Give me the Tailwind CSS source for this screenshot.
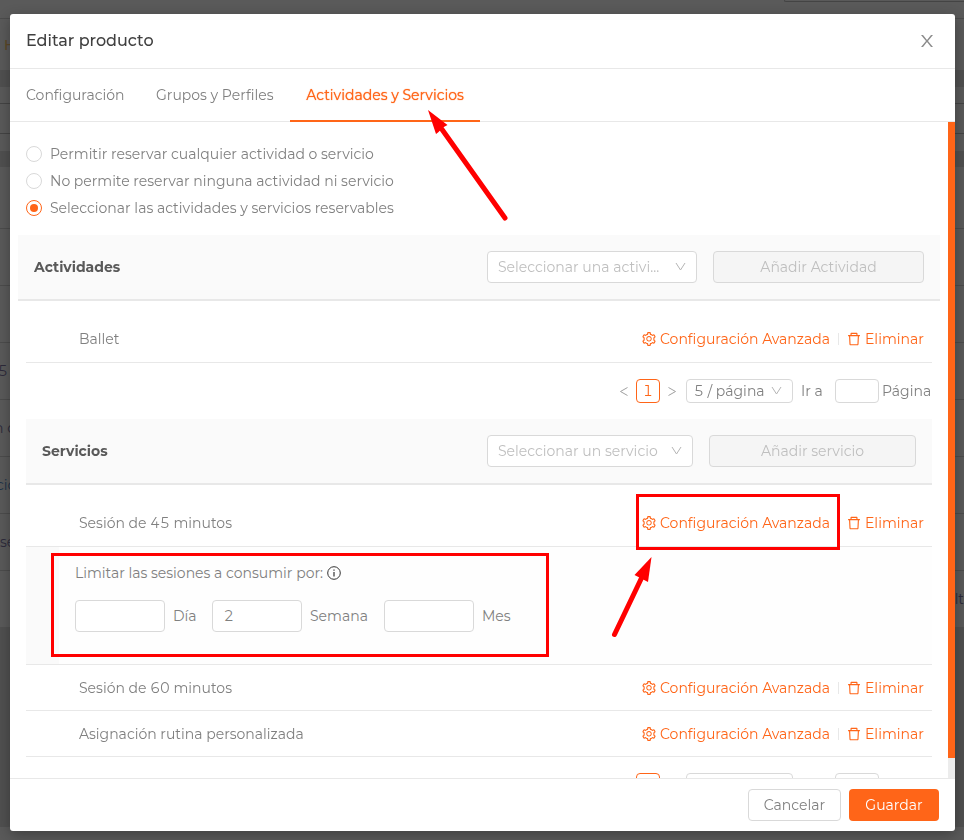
<!DOCTYPE html>
<html lang="es">
<head>
    <meta charset="UTF-8">
    <meta name="viewport" content="width=device-width, initial-scale=1.0">
    <title>Editar producto</title>
    <script src="https://cdn.jsdelivr.net/npm/@tailwindcss/browser@4"></script>
</head>
<body class="font-['Montserrat','Inter',sans-serif] text-[14px] leading-5 font-normal tabular-nums text-[#808080] bg-[#5a5a5a] h-screen overflow-hidden">
    <!-- Icons -->
    <svg class="hidden">
        <symbol id="icon-setting" viewBox="64 64 896 896"><path d="M924.8 625.7l-65.5-56c3.1-19 4.7-38.4 4.7-57.8s-1.6-38.8-4.7-57.8l65.5-56a32.03 32.03 0 009.3-35.2l-.9-2.6a443.74 443.74 0 00-79.7-137.9l-1.8-2.1a32.12 32.12 0 00-35.1-9.5l-81.3 28.9c-30-24.6-63.5-44-99.7-57.6l-15.7-85a32.05 32.05 0 00-25.8-25.7l-2.7-.5c-52.1-9.4-106.9-9.4-159 0l-2.7.5a32.05 32.05 0 00-25.8 25.7l-15.8 85.4a351.86 351.86 0 00-99 57.4l-81.9-29.1a32 32 0 00-35.1 9.5l-1.8 2.1a446.02 446.02 0 00-79.7 137.9l-.9 2.6c-4.5 12.5-.8 26.5 9.3 35.2l66.3 56.6c-3.1 18.8-4.6 38-4.6 57.1 0 19.2 1.5 38.4 4.6 57.1L99 625.5a32.03 32.03 0 00-9.3 35.2l.9 2.6c18.1 50.4 44.9 96.9 79.7 137.9l1.8 2.1a32.12 32.12 0 0035.1 9.5l81.9-29.1c29.8 24.5 63.1 43.9 99 57.4l15.8 85.4a32.05 32.05 0 0025.8 25.7l2.7.5a449.4 449.4 0 00159 0l2.7-.5a32.05 32.05 0 0025.8-25.7l15.7-85a350 350 0 0099.7-57.6l81.3 28.9a32 32 0 0035.1-9.5l1.8-2.1c34.8-41.1 61.6-87.5 79.7-137.9l.9-2.6c4.5-12.3.8-26.3-9.3-35zM788.3 465.9c2.5 15.1 3.8 30.6 3.8 46.1s-1.3 31-3.8 46.1l-6.6 40.1 74.7 63.9a370.03 370.03 0 01-42.6 73.6L721 702.8l-31.4 25.8c-23.9 19.6-50.5 35-79.3 45.8l-38.1 14.3-17.9 97a377.5 377.5 0 01-85 0l-17.9-97.2-37.8-14.5c-28.5-10.8-55-26.2-78.7-45.7l-31.4-25.9-93.4 33.2c-17-22.9-31.2-47.6-42.6-73.6l75.5-64.5-6.5-40c-2.4-14.9-3.7-30.3-3.7-45.5 0-15.3 1.2-30.6 3.7-45.5l6.5-40-75.5-64.5c11.3-26.1 25.6-50.7 42.6-73.6l93.4 33.2 31.4-25.9c23.7-19.5 50.2-34.9 78.7-45.7l37.9-14.3 17.9-97.2c28.1-3.2 56.8-3.2 85 0l17.9 97 38.1 14.3c28.7 10.8 55.4 26.2 79.3 45.8l31.4 25.8 92.8-32.9c17 22.9 31.2 47.6 42.6 73.6L781.8 426l6.5 39.9zM512 326c-97.2 0-176 78.8-176 176s78.8 176 176 176 176-78.8 176-176-78.8-176-176-176zm79.2 255.2A111.6 111.6 0 01512 614c-29.9 0-58-11.7-79.2-32.8A111.6 111.6 0 01400 502c0-29.9 11.7-58 32.8-79.2C454 401.6 482.1 390 512 390c29.9 0 58 11.6 79.2 32.8A111.6 111.6 0 01624 502c0 29.9-11.7 58-32.8 79.2z"/></symbol>
        <symbol id="icon-delete" viewBox="64 64 896 896"><path d="M360 184h-8c4.4 0 8-3.6 8-8v8h304v-8c0 4.4 3.6 8 8 8h-8v72h72v-80c0-35.3-28.7-64-64-64H352c-35.3 0-64 28.7-64 64v80h72v-72zm504 72H160c-17.7 0-32 14.3-32 32v32c0 4.4 3.6 8 8 8h60.4l24.7 523c1.6 34.1 29.8 61 63.9 61h454c34.2 0 62.3-26.8 63.9-61l24.7-523H888c4.4 0 8-3.6 8-8v-32c0-17.7-14.3-32-32-32zM731.3 840H292.7l-24.2-512h487l-24.2 512z"/></symbol>
        <symbol id="icon-down" viewBox="0 0 12 12"><path d="M1 2l4.500 7L10 2" fill="none" stroke="currentColor"/></symbol>
        <symbol id="icon-left" viewBox="0 0 12 12"><path d="M9.500 2.500l-7 4 7 4" fill="none" stroke="currentColor"/></symbol>
        <symbol id="icon-right" viewBox="0 0 12 12"><path d="M2.500 2.500l7 4-7 4" fill="none" stroke="currentColor"/></symbol>
    </svg>

    <!-- Page behind the modal -->
    <div class="h-full flex flex-col overflow-hidden text-[#2d2a3a]">
        <div class="h-[19px] shrink-0 border-b border-[#4c4c4c] flex justify-end items-start">
            <div class="w-[180px] h-[2px] border-b border-l border-[#444] rounded-bl"></div>
        </div>
        <div class="h-[51px] shrink-0 flex items-center pl-1 text-[#5c4726] font-medium">H</div>
        <div class="h-[17px] shrink-0 bg-[#505050]"></div>
        <div class="h-[17px] shrink-0 border-b border-[#444]"></div>
        <div class="h-[30px] shrink-0 border-b border-[#444]"></div>
        <div class="h-[17px] shrink-0"></div>
        <div class="h-4 shrink-0 bg-[#505050]"></div>
        <div class="h-[62px] shrink-0 border-b border-[#4c4c4c]"></div>
        <div class="h-[57px] shrink-0 border-b border-[#4c4c4c]"></div>
        <div class="h-[57px] shrink-0 border-b border-[#4c4c4c]"></div>
        <div class="h-[57px] shrink-0 border-b border-[#4c4c4c] flex items-center"><span class="-ml-0.5">5</span></div>
        <div class="h-[57px] shrink-0 border-b border-[#4c4c4c] flex items-center"><span class="-ml-1.5">n o</span></div>
        <div class="h-[57px] shrink-0 border-b border-[#4c4c4c] flex items-center text-[#1f3348]"><span class="-ml-1">cio</span></div>
        <div class="h-[57px] shrink-0 border-b border-[#4c4c4c] flex items-center">se</div>
        <div class="h-[56px] shrink-0 flex items-center justify-end">lt</div>
        <div class="h-[200px] shrink-0 bg-[#505050]"></div>
    </div>

    <!-- Modal -->
    <div class="fixed inset-0 pt-[14px] pr-[9px] pb-[9px] pl-[10px]">
        <div role="dialog" aria-labelledby="title" class="h-full flex flex-col bg-white rounded-[3px] overflow-hidden shadow-[0_4px_14px_rgba(0,0,0,0.3)]">
            <header class="h-[55px] shrink-0 px-4 pb-px flex items-center justify-between border-b border-[#e8e8e8]">
                <h1 id="title" class="text-[16px] font-medium text-[#404040]">Editar producto</h1>
                <button aria-label="Cerrar" class="w-6 h-6 flex items-center justify-center text-[#8c8c8c]">
                    <svg class="w-4 h-4" viewBox="0 0 16 16" fill="currentColor"><path d="M2 2h2l4 5 4-5h2L9 8l5 6h-2L8 9l-4 5H2l5-6z"/></svg>
                </button>
            </header>

            <nav class="h-[53px] shrink-0 flex border-b border-[#e8e8e8]">
                <a href="#config" class="w-[130px] flex items-center pl-4">Configuración</a>
                <a href="#grupos" class="w-[150px] flex items-center pl-4">Grupos y Perfiles</a>
                <a href="#actividades" class="w-[190px] h-[53px] flex items-center justify-center text-[#ff6518] [text-shadow:0_0_1px_#ff6518] border-b-2 border-[#ff6518]">Actividades y Servicios</a>
            </nav>

            <div class="flex-1 min-h-0 flex">
                <main class="flex-1 min-w-0 overflow-hidden pt-[18px] pl-4 pr-4">
                    <div>
                        <label class="h-[27px] flex items-center gap-2">
                            <input type="radio" name="reserva" class="appearance-none w-4 h-4 rounded-full border border-[#d9d9d9]">
                            Permitir reservar cualquier actividad o servicio
                        </label>
                        <label class="h-[27px] flex items-center gap-2">
                            <input type="radio" name="reserva" class="appearance-none w-4 h-4 rounded-full border border-[#d9d9d9]">
                            No permite reservar ninguna actividad ni servicio
                        </label>
                        <label class="h-[27px] flex items-center gap-2">
                            <input type="radio" name="reserva" checked class="appearance-none w-4 h-4 rounded-full border border-[#ff6518] p-[3px] bg-clip-content bg-[#ff6518]">
                            Seleccionar las actividades y servicios reservables
                        </label>
                    </div>

                    <!-- Actividades -->
                    <section class="mt-[14px]">
                        <div class="-mx-2 h-[66px] px-4 flex items-center gap-4 bg-[#fafafa] border-b-2 border-[#e8e8e8]">
                            <h2 class="flex-1 font-bold text-[#595959]">Actividades</h2>
                            <div class="relative w-[210px]">
                                <select aria-label="Actividad" class="appearance-none w-full h-8 pl-2.5 pr-7 rounded border border-[#d9d9d9] bg-white text-[#bfbfbf]">
                                    <option>Seleccionar una activi...</option>
                                </select>
                                <svg class="absolute right-2.5 top-2.5 w-3 h-3 text-[#b5b5b5] pointer-events-none"><use href="#icon-down"/></svg>
                            </div>
                            <button disabled class="w-[211px] h-8 rounded border border-[#d9d9d9] bg-[#f5f5f5] text-[#bfbfbf]">Añadir Actividad</button>
                        </div>
                        <table class="w-full mt-[15px]">
                            <tbody>
                                <tr class="h-[46px] border-b border-[#e8e8e8]">
                                    <td class="pl-[53px]">Ballet</td>
                                    <td class="pr-2">
                                        <div class="flex justify-end items-center text-[#ff6518]">
                                            <a href="#avanzada" class="w-[188px] flex items-center gap-1 whitespace-nowrap"><svg class="w-3.5 h-3.5 shrink-0 fill-current"><use href="#icon-setting"/></svg>Configuración Avanzada</a>
                                            <span class="mx-2 w-px h-3 bg-[#e8e8e8]"></span>
                                            <a href="#eliminar" class="w-[77px] flex items-center gap-1 whitespace-nowrap"><svg class="w-3.5 h-3.5 shrink-0 fill-current"><use href="#icon-delete"/></svg>Eliminar</a>
                                        </div>
                                    </td>
                                </tr>
                            </tbody>
                        </table>
                        <div class="my-4 h-6 flex justify-end items-center">
                            <button aria-label="Anterior" class="w-6 h-6 flex items-center justify-center text-[#a0a0a0]"><svg class="w-3 h-3"><use href="#icon-left"/></svg></button>
                            <button class="w-6 h-6 rounded border border-[#ff6518] text-[#ff6518]">1</button>
                            <button aria-label="Siguiente" class="w-6 h-6 flex items-center justify-center text-[#a0a0a0]"><svg class="w-3 h-3"><use href="#icon-right"/></svg></button>
                            <div class="relative w-[107px] ml-0.5">
                                <select aria-label="Filas por página" class="appearance-none block w-full h-6 pl-[7px] rounded border border-[#d9d9d9]">
                                    <option>5 / página</option>
                                </select>
                                <svg class="absolute right-2.5 top-1.5 w-3 h-3 text-[#b5b5b5] pointer-events-none"><use href="#icon-down"/></svg>
                            </div>
                            <label class="ml-2 w-[34px]" for="pag1">Ir a</label>
                            <input id="pag1" type="text" class="w-11 h-6 px-2 rounded border border-[#d9d9d9]">
                            <span class="w-[53px] pl-[3px]">Página</span>
                        </div>
                    </section>

                    <!-- Servicios -->
                    <section>
                        <div class="h-[66px] px-4 flex items-center gap-4 bg-[#fafafa] border-b-2 border-[#e8e8e8]">
                            <h2 class="flex-1 font-bold text-[#595959]">Servicios</h2>
                            <div class="relative w-[206px]">
                                <select aria-label="Servicio" class="appearance-none w-full h-8 pl-2.5 pr-7 rounded border border-[#d9d9d9] bg-white text-[#bfbfbf]">
                                    <option>Seleccionar un servicio</option>
                                </select>
                                <svg class="absolute right-2.5 top-2.5 w-3 h-3 text-[#b5b5b5] pointer-events-none"><use href="#icon-down"/></svg>
                            </div>
                            <button disabled class="w-[207px] h-8 rounded border border-[#d9d9d9] bg-[#f5f5f5] text-[#bfbfbf]">Añadir servicio</button>
                        </div>
                        <table class="w-full mt-4">
                            <tbody>
                                <tr class="h-[46px] border-b border-[#e8e8e8]">
                                    <td class="pl-[53px]">Sesión de 45 minutos</td>
                                    <td class="pr-2">
                                        <div class="flex justify-end items-center text-[#ff6518]">
                                            <a href="#avanzada" class="relative z-10 w-[188px] flex items-center gap-1 whitespace-nowrap"><svg class="w-3.5 h-3.5 shrink-0 fill-current"><use href="#icon-setting"/></svg>Configuración Avanzada<span class="absolute -left-1.5 -right-2.5 -top-[19px] h-14 border-3 border-[#ff0000]"></span></a>
                                            <span class="mx-2 w-px h-3 bg-[#e8e8e8]"></span>
                                            <a href="#eliminar" class="w-[77px] flex items-center gap-1 whitespace-nowrap"><svg class="w-3.5 h-3.5 shrink-0 fill-current"><use href="#icon-delete"/></svg>Eliminar</a>
                                        </div>
                                    </td>
                                </tr>
                                <tr class="h-[118px] border-b border-[#e8e8e8]">
                                    <td colspan="2" class="p-0 align-top">
                                        <div class="relative h-[117px] border-l-[33px] border-[#fafafa] bg-[#fefefe] pt-4 pl-4">
                                            <div class="flex items-center gap-1">
                                                Limitar las sesiones a consumir por:
                                                <svg class="w-3.5 h-3.5 text-[#333]" viewBox="0 0 14 14" fill="none" stroke="currentColor"><circle cx="7" cy="7" r="6.300"/><path d="M7 6v4.500M7 3.500v1.300" stroke-width="1.200"/></svg>
                                            </div>
                                            <div class="mt-[17px] flex items-center">
                                                <input id="dia" type="text" class="w-[90px] h-8 px-[11px] rounded border border-[#d9d9d9] bg-white">
                                                <label for="dia" class="w-[47px] pl-2">Día</label>
                                                <input id="semana" type="text" value="2" class="w-[90px] h-8 px-[11px] rounded border border-[#d9d9d9] bg-white">
                                                <label for="semana" class="w-[82px] pl-2">Semana</label>
                                                <input id="mes" type="text" class="w-[90px] h-8 px-[11px] rounded border border-[#d9d9d9] bg-white">
                                                <label for="mes" class="pl-2">Mes</label>
                                            </div>
                                            <div class="absolute -left-2 top-1.5 w-[498px] h-[104px] border-3 border-[#ff0000] pointer-events-none"></div>
                                        </div>
                                    </td>
                                </tr>
                                <tr class="h-[46px] border-b border-[#e8e8e8]">
                                    <td class="pl-[53px]">Sesión de 60 minutos</td>
                                    <td class="pr-2">
                                        <div class="flex justify-end items-center text-[#ff6518]">
                                            <a href="#avanzada" class="w-[188px] flex items-center gap-1 whitespace-nowrap"><svg class="w-3.5 h-3.5 shrink-0 fill-current"><use href="#icon-setting"/></svg>Configuración Avanzada</a>
                                            <span class="mx-2 w-px h-3 bg-[#e8e8e8]"></span>
                                            <a href="#eliminar" class="w-[77px] flex items-center gap-1 whitespace-nowrap"><svg class="w-3.5 h-3.5 shrink-0 fill-current"><use href="#icon-delete"/></svg>Eliminar</a>
                                        </div>
                                    </td>
                                </tr>
                                <tr class="h-[46px] border-b border-[#e8e8e8]">
                                    <td class="pl-[53px]">Asignación rutina personalizada</td>
                                    <td class="pr-2">
                                        <div class="flex justify-end items-center text-[#ff6518]">
                                            <a href="#avanzada" class="w-[188px] flex items-center gap-1 whitespace-nowrap"><svg class="w-3.5 h-3.5 shrink-0 fill-current"><use href="#icon-setting"/></svg>Configuración Avanzada</a>
                                            <span class="mx-2 w-px h-3 bg-[#e8e8e8]"></span>
                                            <a href="#eliminar" class="w-[77px] flex items-center gap-1 whitespace-nowrap"><svg class="w-3.5 h-3.5 shrink-0 fill-current"><use href="#icon-delete"/></svg>Eliminar</a>
                                        </div>
                                    </td>
                                </tr>
                            </tbody>
                        </table>
                        <!-- Pagination, cut off by the footer -->
                        <div class="mt-4 h-6 flex justify-end">
                            <button aria-label="Página actual" class="w-6 h-6 rounded border border-[#ff6518]"></button>
                            <select aria-label="Filas por página" class="appearance-none w-[107px] h-6 ml-[26px] rounded border border-[#d9d9d9]"></select>
                            <input aria-label="Ir a página" type="text" class="w-11 h-6 ml-[42px] mr-[53px] rounded border border-[#d9d9d9]">
                        </div>
                    </section>
                </main>
                <!-- Scrollbar -->
                <div class="w-[7px] shrink-0 bg-[#ececec]">
                    <div class="h-[97%] bg-[#ff6518]"></div>
                </div>
            </div>

            <footer class="h-[53px] shrink-0 px-4 pb-px flex items-center justify-end gap-2 border-t border-[#e8e8e8]">
                <button class="w-[93px] h-8 rounded border border-[#d9d9d9]">Cancelar</button>
                <button class="w-[90px] h-8 rounded bg-[#ff6518] text-white">Guardar</button>
            </footer>
        </div>
    </div>

    <!-- Arrows -->
    <svg class="absolute left-[420px] top-[100px] w-[100px] h-[130px] pointer-events-none" viewBox="420 100 100 130" fill="#ff0000">
        <path d="M428 110l19.500 15-4.500 2.500-5 5-2 1.500z"/>
        <path d="M441 128l64 90" stroke="#ff0000" stroke-width="5" stroke-linecap="round"/>
    </svg>
    <svg class="absolute left-[600px] top-[550px] w-[60px] h-[100px] pointer-events-none" viewBox="600 550 60 100" fill="#ff0000">
        <path d="M651.500 557l-3.500 25-13.500-7z"/>
        <path d="M642 577l-27.500 57.500" stroke="#ff0000" stroke-width="5" stroke-linecap="round"/>
    </svg>
</body>
</html>
